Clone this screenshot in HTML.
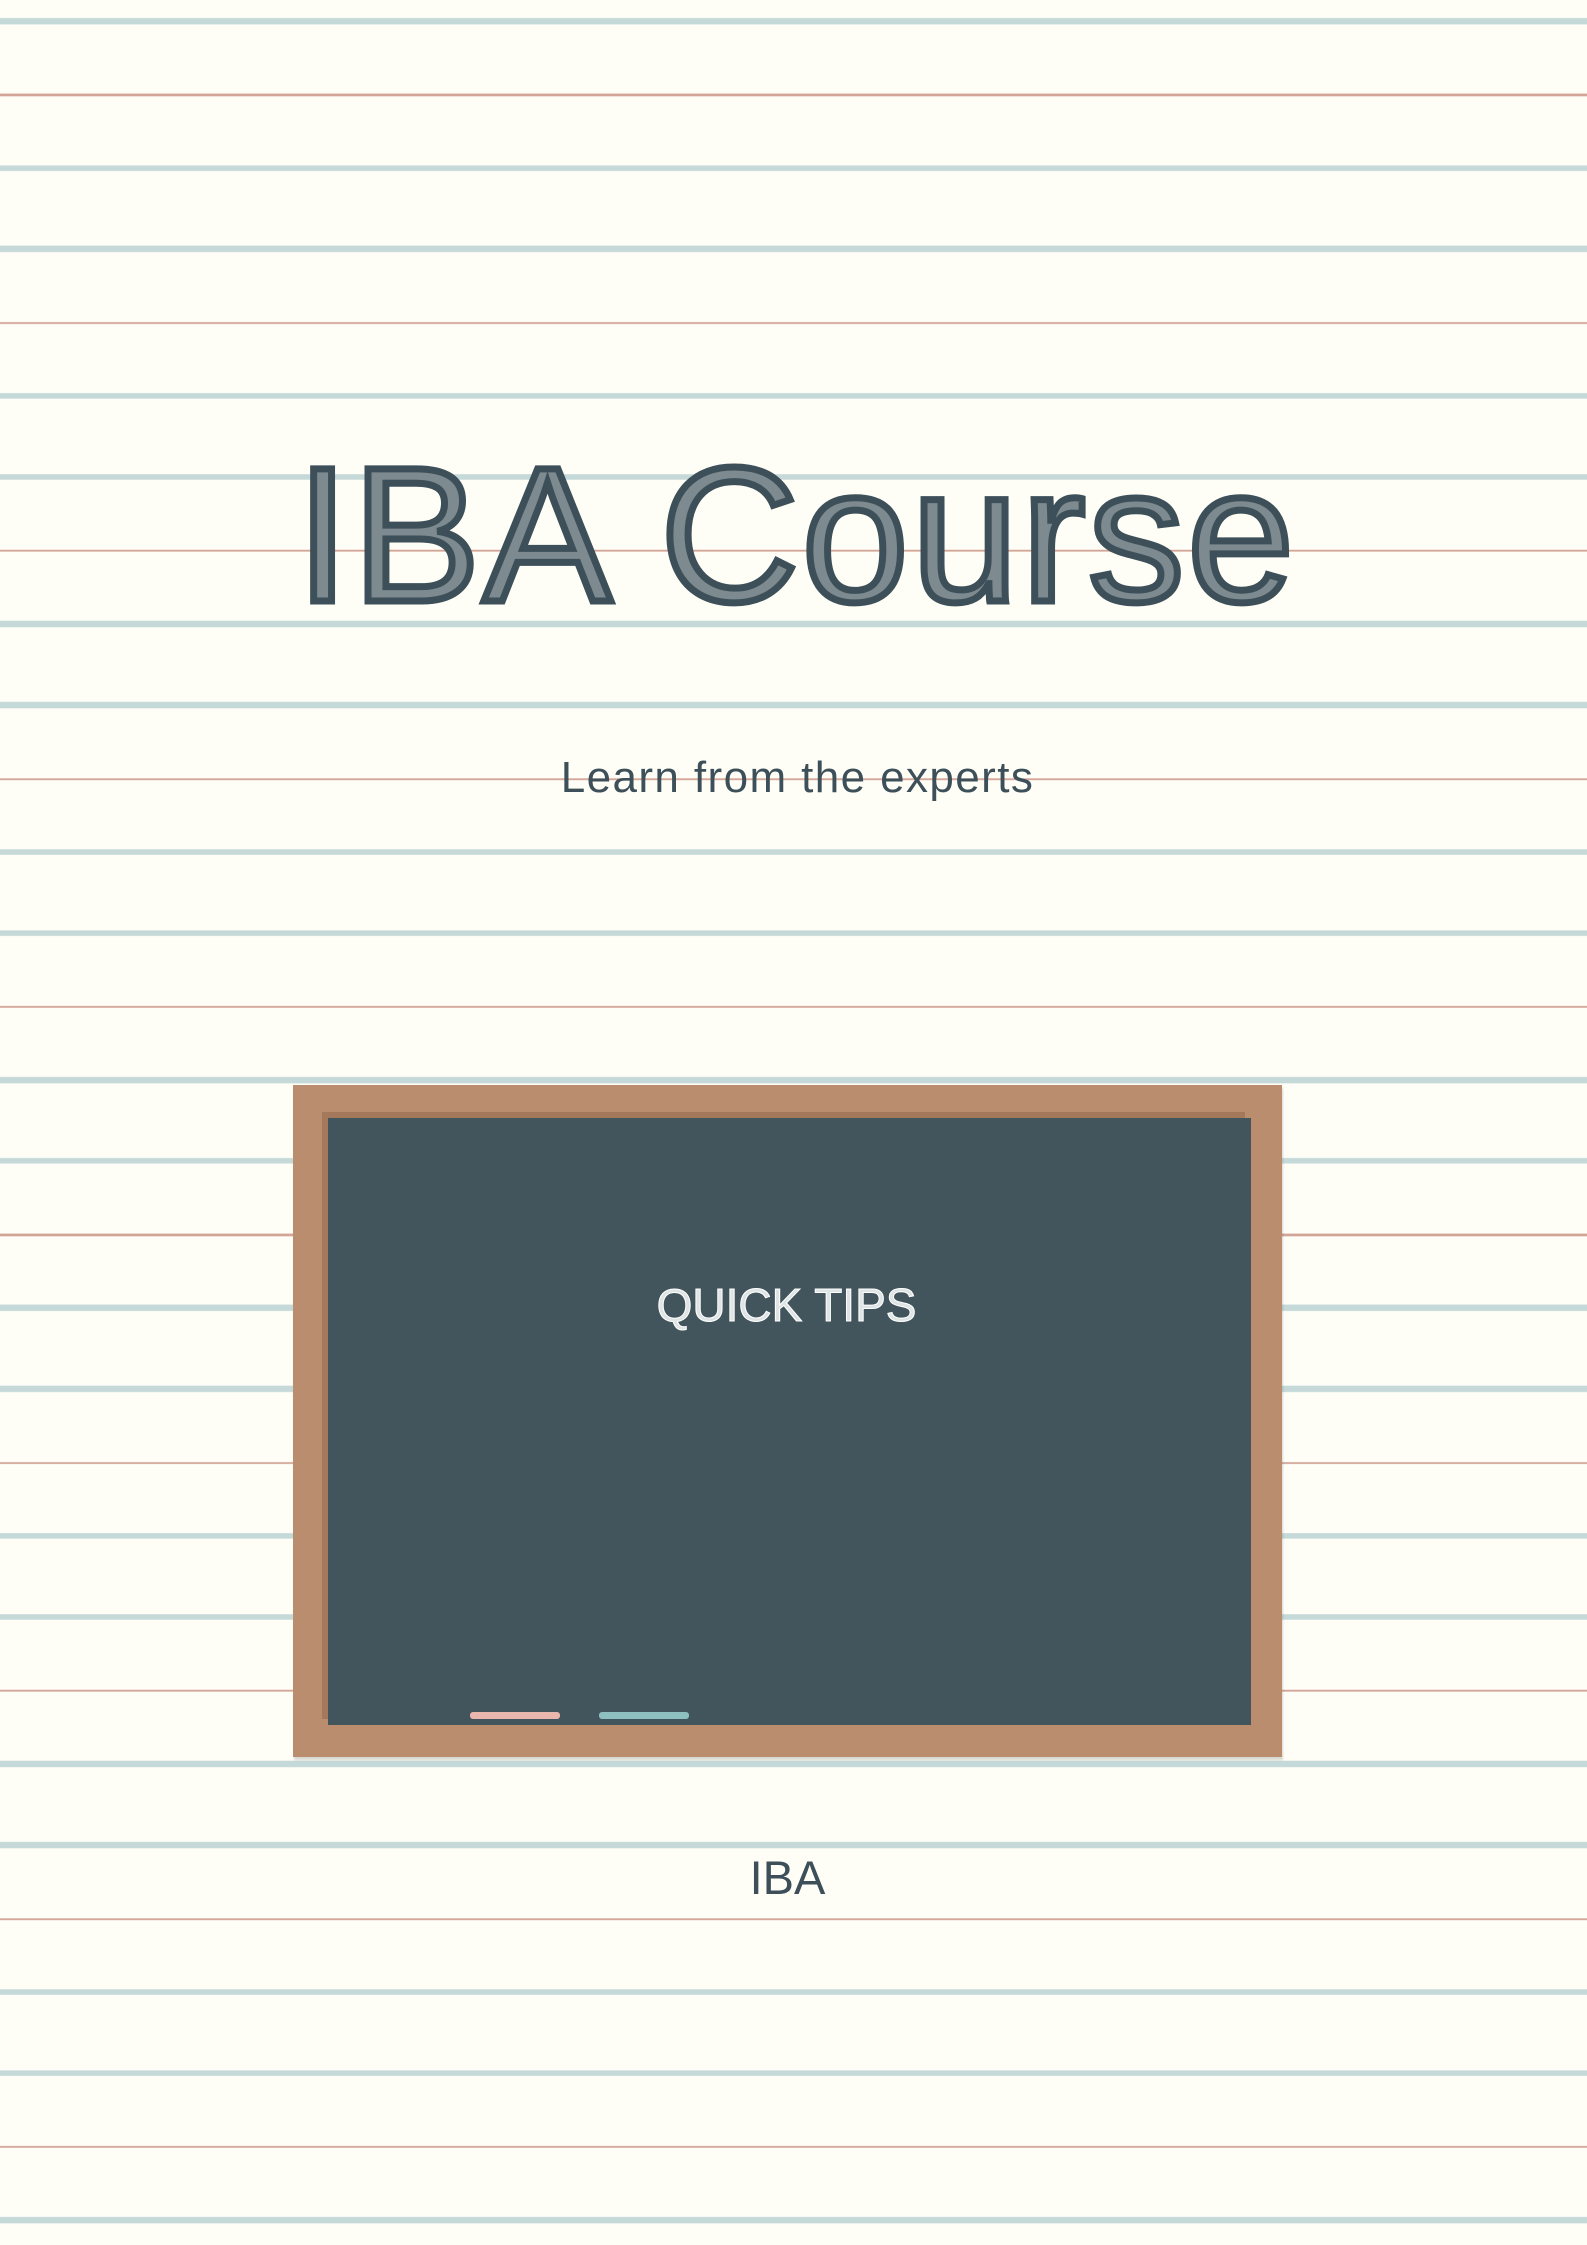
<!DOCTYPE html>
<html><head><style>
html,body{margin:0;padding:0}
body{width:1587px;height:2245px;position:relative;overflow:hidden;background-color:#fefef7;
background-image:repeating-linear-gradient(to bottom,#c6d9d9 0,#c6d9d9 6px,transparent 6px,transparent 76px,#d3a597 76px,#d3a597 78px,transparent 78px,transparent 147px,#c6d9d9 147px,#c6d9d9 153px,transparent 153px,transparent 228px);
background-position:0 18px;font-family:"Liberation Sans",sans-serif}
.t{position:absolute;left:0;width:1587px;text-align:center;line-height:1;white-space:nowrap}
#title{top:439px;font-size:192px;color:#7d8a8f;-webkit-text-stroke:7px #3d4f58;letter-spacing:3px;left:3px}
#sub{top:756px;font-size:44px;color:#3d4f58;letter-spacing:1.4px;left:4px}
#frame{position:absolute;left:293px;top:1085px;width:989px;height:672px;background:#b98d6d;box-shadow:1px 3px 2px rgba(0,0,0,.15)}
#inner{position:absolute;left:35px;top:33px;width:923px;height:607px;background:#42545c;box-shadow:-6px -6px 0 #a4785a}
#qt{top:1282px;font-size:46px;color:#dfe4e4;-webkit-text-stroke:1px #fff;left:-7px}
.ch{position:absolute;top:1712px;height:7px;width:90px;border-radius:3px}
#foot{top:1854px;font-size:47px;color:#3d4f58;left:-6px}
</style></head><body>
<div class="t" id="title">IBA Course</div>
<div class="t" id="sub">Learn from the experts</div>
<div id="frame"><div id="inner"></div></div>
<div class="t" id="qt">QUICK TIPS</div>
<div class="ch" style="left:470px;background:#eab7ae"></div>
<div class="ch" style="left:599px;background:#8fc0c0"></div>
<div class="t" id="foot">IBA</div>
</body></html>
